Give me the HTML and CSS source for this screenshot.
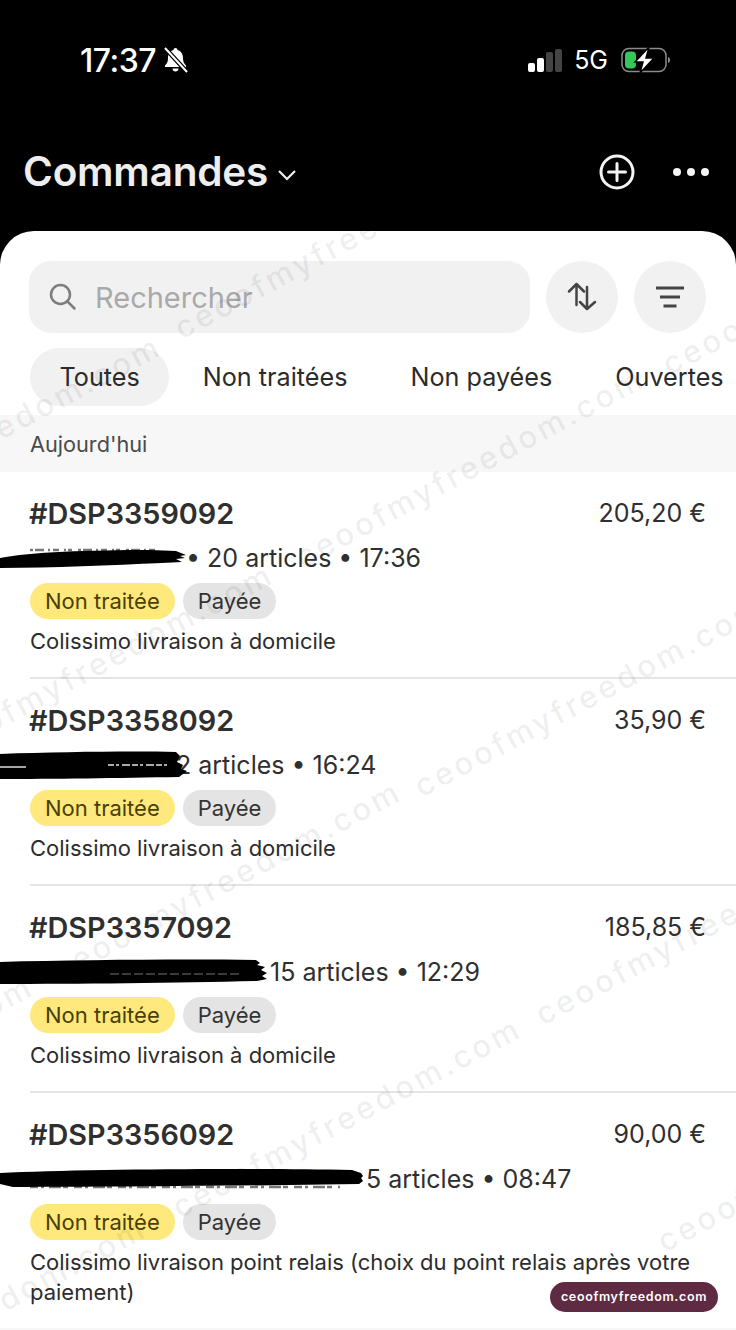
FILE: index.html
```html
<!DOCTYPE html>
<html lang="fr">
  <head>
    <meta charset="UTF-8" />
    <meta name="viewport" content="width=device-width, initial-scale=1.0" />
    <title>Commandes</title>
    <link rel="stylesheet" href="styles.css">
  </head>

  <body>
    <div class="phone">
      <div class="status-bar">
        <div class="status-left">
          <span class="clock">17:37</span>
          <svg class="bell" width="27" height="26" viewBox="0 0 27 26">
            <path d="M13.500 1c-1.200 0-2 .8-2 2-3.500 1-5.500 4-5.500 8 0 4-1 5.500-3 7.500V20h21v-1.500c-2-2-3-3.500-3-7.500 0-4-2-7-5.500-8 0-1.200-.8-2-2-2z" fill="#fff"/>
            <path d="M10.500 21.500h6c0 1.800-1.300 3-3 3s-3-1.200-3-3z" fill="#fff"/>
            <path d="M3 1l22 24" stroke="#000" stroke-width="4.500"/>
            <path d="M3 1l22 24" stroke="#fff" stroke-width="2"/>
          </svg>
        </div>
        <div class="status-right">
          <div class="signal">
            <i class="bar on b1"></i><i class="bar on b2"></i><i class="bar b3"></i><i class="bar b4"></i>
          </div>
          <span class="network">5G</span>
          <svg class="battery" width="50" height="26" viewBox="0 0 50 26">
            <rect x="1" y="1.500" width="44" height="23" rx="7" fill="none" stroke="#8c8c8c" stroke-width="1.500"/>
            <rect x="4" y="4.500" width="11" height="17" rx="4" fill="#34c759"/>
            <path d="M47 10c1.500.5 2 1.500 2 3s-.5 2.500-2 3z" fill="#8c8c8c"/>
            <path d="M28 0L14 15h8l-3 11 14-15h-8z" fill="#fff" stroke="#000" stroke-width="1.500"/>
          </svg>
        </div>
      </div>

      <div class="top-bar">
        <div class="page-title">
          <h1>Commandes</h1>
          <svg width="20" height="12" viewBox="0 0 20 12"><path d="M2 2l8 8 8-8" fill="none" stroke="#f0f0f0" stroke-width="2.200"/></svg>
        </div>
        <div class="top-actions">
          <svg width="36" height="36" viewBox="0 0 36 36">
            <circle cx="18" cy="18" r="16" fill="none" stroke="#f4f4f4" stroke-width="3"/>
            <path d="M18 9.500v17M9.500 18h17" stroke="#f4f4f4" stroke-width="3" stroke-linecap="round"/>
          </svg>
          <div class="dots"><i></i><i></i><i></i></div>
        </div>
      </div>

      <div class="sheet">
        <div class="search-row">
          <div class="search">
            <svg width="30" height="30" viewBox="0 0 30 30">
              <circle cx="12.500" cy="12.500" r="9.500" fill="none" stroke="#7d7d7d" stroke-width="2.500"/>
              <path d="M19.500 19.500l7 7" stroke="#7d7d7d" stroke-width="2.500" stroke-linecap="round"/>
            </svg>
            <span>Rechercher</span>
          </div>
          <button class="round-btn">
            <svg width="30" height="30" viewBox="0 0 30 30">
              <path d="M9.500 23V2M2 9.500L9.500 2 17 9.500M20 5v22M13 20l7 7 8-7" fill="none" stroke="#444" stroke-width="2.500" stroke-linecap="round" stroke-linejoin="round"/>
            </svg>
          </button>
          <button class="round-btn">
            <svg width="30" height="24" viewBox="0 0 30 24">
              <path d="M1 3h28M5 12h20M8.500 21h13" fill="none" stroke="#444" stroke-width="3"/>
            </svg>
          </button>
        </div>

        <div class="tabs">
          <div class="tab active">Toutes</div>
          <div class="tab">Non traitées</div>
          <div class="tab">Non payées</div>
          <div class="tab">Ouvertes</div>
        </div>

        <div class="day-label">Aujourd'hui</div>

        <div class="order">
          <div class="order-top"><span class="order-id">#DSP3359092</span><span class="price">205,20 €</span></div>
          <div class="order-sub">
            <svg class="redact" width="186" height="30" viewBox="0 0 186 30">
              <path d="M30 7h126" stroke="#777" stroke-width="2.500" stroke-dasharray="3 2 9 4 2 3 6 5 2 2 4 6"/>
              <path d="M0 15C30 9 90 7 150 7l26 1 10 4-6 1 5 2-9 1 6 3-20 1c-50 2-110 5-162 5z" fill="#000"/>
            </svg>• 20 articles • 17:36</div>
          <div class="pills"><span class="pill yellow">Non traitée</span><span class="pill grey">Payée</span></div>
          <div class="shipping">Colissimo livraison à domicile</div>
        </div>
        <div class="order">
          <div class="order-top"><span class="order-id">#DSP3358092</span><span class="price">35,90 €</span></div>
          <div class="order-sub">
            <svg class="redact" width="176" height="30" viewBox="0 0 176 30">
              <path d="M0 4C60 2 130 1 176 2l4 4-3 6 6 3-2 4 6 2-8 6C120 28 50 29 0 29z" fill="#000"/>
              <path d="M0 17h26" stroke="#ddd" stroke-width="1.500"/>
              <path d="M108 15h60" stroke="#aaa" stroke-width="2" stroke-dasharray="6 2 3 3 8 2"/>
            </svg>2 articles • 16:24</div>
          <div class="pills"><span class="pill yellow">Non traitée</span><span class="pill grey">Payée</span></div>
          <div class="shipping">Colissimo livraison à domicile</div>
        </div>
        <div class="order">
          <div class="order-top"><span class="order-id">#DSP3357092</span><span class="price">185,85 €</span></div>
          <div class="order-sub">
            <svg class="redact" width="270" height="30" viewBox="0 0 270 30">
              <path d="M0 5C80 3 180 2 256 3l4 3-3 2 8 2-4 3 6 3-5 3 5 3-10 2c-80 2-180 3-257 3z" fill="#000"/>
              <path d="M110 17h130" stroke="#777" stroke-width="1" stroke-dasharray="9 3"/>
            </svg>15 articles • 12:29</div>
          <div class="pills"><span class="pill yellow">Non traitée</span><span class="pill grey">Payée</span></div>
          <div class="shipping">Colissimo livraison à domicile</div>
        </div>
        <div class="order last">
          <div class="order-top"><span class="order-id">#DSP3356092</span><span class="price">90,00 €</span></div>
          <div class="order-sub">
            <svg class="redact" width="366" height="30" viewBox="0 0 366 30">
              <path d="M30 23h310" stroke="#777" stroke-width="2.500" stroke-dasharray="8 3 3 5 12 2 5 6"/>
              <path d="M0 9C80 5 250 4 352 6l9 3 2 3-2 2 2 3-4 3-70 1c-90 1-200 2-276 2L0 20z" fill="#000"/>
            </svg>5 articles • 08:47</div>
          <div class="pills"><span class="pill yellow">Non traitée</span><span class="pill grey">Payée</span></div>
          <div class="shipping">Colissimo livraison point relais (choix du point relais après votre paiement)</div>
        </div>
        <div class="next-day"></div>
      </div>

      <!-- filigrane par dessus la page -->
      <div class="marks">
        <span class="m1">ceoofmyfreedom.com</span>
        <span class="m2">ceoofmyfreedom.com</span>
        <span class="m3">ceoofmyfreedom.com</span>
        <span class="m4">ceoofmyfreedom.com</span>
        <span class="m5">ceoofmyfreedom.com</span>
        <span class="m6">ceoofmyfreedom.com</span>
        <span class="m7">ceoofmyfreedom.com</span>
        <span class="m8">ceoofmyfreedom.com</span>
        <span class="m9">ceoofmyfreedom.com</span>
        <span class="m10">ceoofmyfreedom.com</span>
        <span class="m11">ceoofmyfreedom.com</span>
        <span class="m12">ceoofmyfreedom.com</span>
      </div>

      <div class="brand">ceoofmyfreedom.com</div>
    </div>
  </body>
</html>
```

FILE: styles.css
```css
* {
  box-sizing: border-box;
}

body {
  margin: 0;
  background-color: #000;
  font-family: Inter, "Liberation Sans", sans-serif;
}

.phone {
  position: relative;
  width: 736px;
  height: 1330px;
  overflow: hidden;
  background-color: #000;
}

.status-bar {
  display: flex;
  justify-content: space-between;
  align-items: center;
  height: 90px;
  padding: 30px 65px 0 80px;
  color: #fff;
}

.status-left,
.status-right {
  display: flex;
  align-items: center;
}

.clock {
  font-size: 32px;
  font-weight: 500;
  letter-spacing: -0.5px;
}

.bell {
  margin-left: 6px;
}

.signal {
  display: flex;
  align-items: flex-end;
  gap: 2px;
  height: 23px;
}

.bar {
  width: 7px;
  background-color: #444;
  border-radius: 2px;
}

.bar.on {
  background-color: #fff;
}

.b1 { height: 9px; }
.b2 { height: 14px; }
.b3 { height: 20px; }
.b4 { height: 23px; }

.network {
  margin-left: 12px;
  font-size: 25px;
  font-weight: 400;
}

.battery {
  margin-left: 13px;
}

.top-bar {
  display: flex;
  justify-content: space-between;
  align-items: center;
  height: 65px;
  margin-top: 49px;
  padding: 0 27px 0 23px;
}

.page-title {
  display: flex;
  align-items: center;
  gap: 9px;
}

.page-title svg {
  margin-top: 6px;
}

h1 {
  margin: 0;
  color: #eee;
  font-size: 40.500px;
  font-weight: 600;
  letter-spacing: -0.2px;
}

.top-actions {
  display: flex;
  align-items: center;
  gap: 38px;
}

.dots {
  display: flex;
  gap: 6px;
}

.dots i {
  width: 8px;
  height: 8px;
  border-radius: 50%;
  background-color: #f4f4f4;
}

.sheet {
  height: 1100px;
  margin-top: 27px;
  padding-top: 30px;
  background-color: #fff;
  border-radius: 34px 34px 0 0;
}

.search-row {
  display: flex;
  gap: 16px;
  padding: 0 30px 0 29px;
}

.search {
  display: flex;
  flex: 1;
  align-items: center;
  gap: 17px;
  height: 72px;
  padding-left: 19px;
  background-color: #f1f1f1;
  border-radius: 22px;
  color: #a9a9a9;
  font-size: 29px;
}

.round-btn {
  display: flex;
  flex: none;
  justify-content: center;
  align-items: center;
  width: 72px;
  height: 72px;
  padding: 0;
  background-color: #f1f1f1;
  border: none;
  border-radius: 50%;
}

.tabs {
  display: flex;
  height: 58px;
  margin-top: 15px;
  padding-left: 30px;
  white-space: nowrap;
}

.tab {
  display: flex;
  align-items: center;
  padding: 0 29.500px;
  margin-right: 4px;
  border-radius: 29px;
  color: #2b2b2b;
  font-size: 25.200px;
}

.tab.active {
  background-color: #f1f1f1;
}

.day-label {
  display: flex;
  align-items: center;
  height: 57px;
  margin-top: 9px;
  padding-left: 30px;
  background-color: #f7f7f7;
  color: #4a4a4a;
  font-size: 21.700px;
}

.order {
  height: 207px;
  margin-left: 30px;
  padding: 22px 30px 0 0;
  border-bottom: 2px solid #e5e5e5;
  color: #2f2f2f;
}

.order.last {
  height: 235px;
  margin-left: 0;
  padding-left: 30px;
  border-bottom-width: 0;
}

.next-day {
  height: 10px;
  background-color: #f7f7f7;
}

.order-top {
  display: flex;
  justify-content: space-between;
  align-items: center;
  height: 38px;
}

.order-id {
  font-size: 28.800px;
  font-weight: 600;
  margin-left: -1px;
}

.price {
  font-size: 25px;
}

.order-sub {
  display: flex;
  align-items: center;
  height: 36px;
  margin-top: 8px;
  font-size: 25px;
  white-space: pre;
}

/* trait de feutre sur le nom du client */
.redact {
  position: relative;
  flex: none;
  margin-left: -30px;
  overflow: visible;
}

.pills {
  display: flex;
  gap: 8px;
  margin-top: 7px;
}

.pill {
  display: flex;
  align-items: center;
  height: 36px;
  padding: 0 15px;
  border-radius: 18px;
  font-size: 22px;
}

.yellow {
  background-color: #ffe97c;
  color: #4a3f05;
}

.grey {
  background-color: #e4e4e4;
  color: #333;
}

.shipping {
  margin-top: 7px;
  font-size: 22px;
  line-height: 30px;
  color: #2c2c2c;
}

.marks {
  position: absolute;
  inset: 0;
  overflow: hidden;
  pointer-events: none;
}

.marks span {
  position: absolute;
  color: rgba(0, 0, 0, 0.08);
  font-size: 31px;
  font-weight: 500;
  letter-spacing: 3.400px;
  line-height: 36px;
  white-space: nowrap;
  transform: rotate(-28deg);
  transform-origin: left bottom;
}

.m1 { left: 185px; top: 310px; }
.m2 { left: -177px; top: 507px; }
.m3 { left: 306px; top: 539px; }
.m4 { left: 673px; top: 346px; }
.m5 { left: -65px; top: 735px; }
.m6 { left: 425px; top: 768px; }
.m7 { left: 63px; top: 952px; }
.m8 { left: 546px; top: 996px; }
.m9 { left: -305px; top: 1147px; }
.m10 { left: 183px; top: 1189px; }
.m11 { left: -192px; top: 1389px; }
.m12 { left: 668px; top: 1223px; }

.brand {
  position: absolute;
  left: 550px;
  top: 1282px;
  width: 168px;
  height: 30px;
  background-color: #5e2b42;
  border-radius: 15px;
  color: #fff;
  font-size: 12.500px;
  font-weight: 600;
  letter-spacing: 0.65px;
  line-height: 30px;
  text-align: center;
}
```
